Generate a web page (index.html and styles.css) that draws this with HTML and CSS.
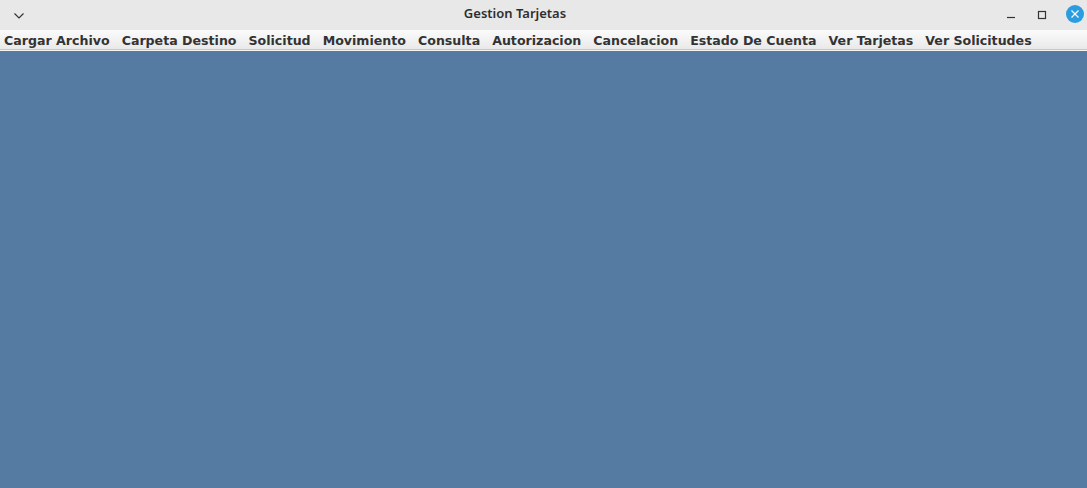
FILE: index.html
```html
<!DOCTYPE html>
<html>
<head>
<meta charset="utf-8">
<link rel="stylesheet" href="styles.css">
</head>
<body>
<div class="window">
  <header class="titlebar">
    <div class="tb-left">
      <svg class="chev" width="12" height="8" viewBox="0 0 12 8"><path d="M1.5 1.5 L6 6 L10.5 1.5" fill="none" stroke="#333" stroke-width="1.2"/></svg>
    </div>
    <div class="title">Gestion Tarjetas</div>
    <div class="tb-right">
      <svg class="ctl" width="12" height="12" viewBox="0 0 12 12"><path d="M2 8.5 H10" stroke="#333" stroke-width="1.2"/></svg>
      <svg class="ctl" width="12" height="12" viewBox="0 0 12 12"><rect x="2.5" y="2.5" width="7" height="7" fill="none" stroke="#333" stroke-width="1.2"/></svg>
      <svg class="close" width="18" height="18" viewBox="0 0 18 18"><circle cx="9" cy="9" r="9" fill="#2a9ce0"/><path d="M5.5 5.5 L12.5 12.5 M12.5 5.5 L5.5 12.5" stroke="#fff" stroke-width="1.2"/></svg>
    </div>
  </header>
  <nav class="menubar">
    <span class="item">Cargar Archivo</span>
    <span class="item">Carpeta Destino</span>
    <span class="item">Solicitud</span>
    <span class="item">Movimiento</span>
    <span class="item">Consulta</span>
    <span class="item">Autorizacion</span>
    <span class="item">Cancelacion</span>
    <span class="item">Estado De Cuenta</span>
    <span class="item">Ver Tarjetas</span>
    <span class="item">Ver Solicitudes</span>
  </nav>
  <main class="content"></main>
</div>
</body>
</html>
```
FILE: styles.css
```css
html, body {
  margin: 0;
  padding: 0;
  height: 100%;
}
body {
  background: #557ba2;
  overflow: hidden;
}
.window {
  display: flex;
  flex-direction: column;
  height: 488px;
}
.titlebar {
  height: 30px;
  background: #e8e8e8;
  display: flex;
  align-items: center;
  flex: none;
}
.tb-left {
  width: 40px;
  display: flex;
  padding-left: 13px;
  padding-top: 2px;
}
.title {
  flex: 1;
  text-align: center;
  font-family: "Noto Sans", "DejaVu Sans", sans-serif;
  font-weight: 600;
  font-size: 13px;
  color: #2e2e2e;
  margin-left: -28px;
  margin-top: -4px;
}
.tb-right {
  display: flex;
  align-items: center;
  gap: 19px;
  padding-right: 3px;
}
.ctl {
  display: block;
  margin-top: -1px;
}
.close {
  display: block;
  margin-left: -1px;
  margin-top: -2px;
}
.menubar {
  flex: none;
  height: 19px;
  display: flex;
  align-items: center;
  padding-left: 4px;
  gap: 12px;
  background: linear-gradient(#fbfbfb, #e9e9e9);
  border-bottom: 1px solid #c8c8c8;
  box-shadow: 0 1px 0 #f4f4f4;
  margin-bottom: 1px;
  font-family: "DejaVu Sans", sans-serif;
  font-weight: bold;
  font-size: 12.6px;
  color: #333;
  white-space: nowrap;
}
.item {
  line-height: 19px;
  padding-top: 2px;
}
.content {
  flex: 1;
  background: #557ba2;
}
```
